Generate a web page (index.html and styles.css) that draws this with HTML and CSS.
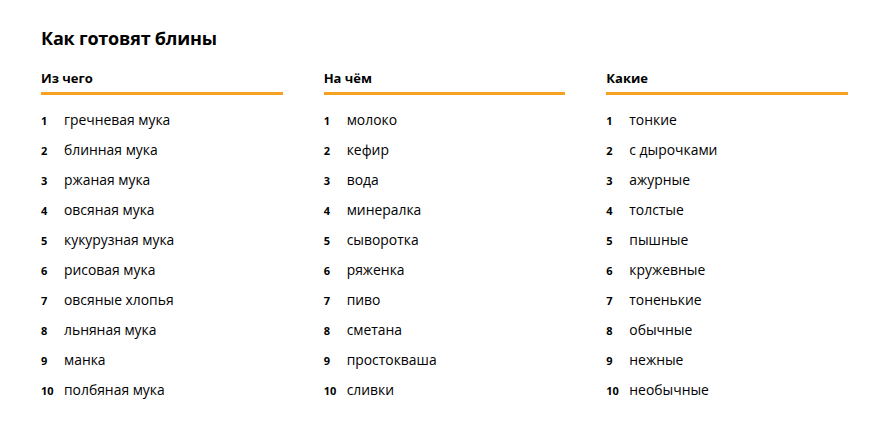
FILE: index.html
```html
<!DOCTYPE html>
<html lang="ru">
<head>
<meta charset="utf-8">
<link rel="stylesheet" href="styles.css">
</head>
<body>
<div class="page">
  <h1 class="title">Как готовят блины</h1>
  <div class="cols">
    <section class="col">
      <h2 class="col-head">Из чего</h2>
      <ol class="list">
        <li><span class="n">1</span><span class="t">гречневая мука</span></li>
        <li><span class="n">2</span><span class="t">блинная мука</span></li>
        <li><span class="n">3</span><span class="t">ржаная мука</span></li>
        <li><span class="n">4</span><span class="t">овсяная мука</span></li>
        <li><span class="n">5</span><span class="t">кукурузная мука</span></li>
        <li><span class="n">6</span><span class="t">рисовая мука</span></li>
        <li><span class="n">7</span><span class="t">овсяные хлопья</span></li>
        <li><span class="n">8</span><span class="t">льняная мука</span></li>
        <li><span class="n">9</span><span class="t">манка</span></li>
        <li><span class="n">10</span><span class="t">полбяная мука</span></li>
      </ol>
    </section>
    <section class="col">
      <h2 class="col-head">На чём</h2>
      <ol class="list">
        <li><span class="n">1</span><span class="t">молоко</span></li>
        <li><span class="n">2</span><span class="t">кефир</span></li>
        <li><span class="n">3</span><span class="t">вода</span></li>
        <li><span class="n">4</span><span class="t">минералка</span></li>
        <li><span class="n">5</span><span class="t">сыворотка</span></li>
        <li><span class="n">6</span><span class="t">ряженка</span></li>
        <li><span class="n">7</span><span class="t">пиво</span></li>
        <li><span class="n">8</span><span class="t">сметана</span></li>
        <li><span class="n">9</span><span class="t">простокваша</span></li>
        <li><span class="n">10</span><span class="t">сливки</span></li>
      </ol>
    </section>
    <section class="col">
      <h2 class="col-head">Какие</h2>
      <ol class="list">
        <li><span class="n">1</span><span class="t">тонкие</span></li>
        <li><span class="n">2</span><span class="t">с дырочками</span></li>
        <li><span class="n">3</span><span class="t">ажурные</span></li>
        <li><span class="n">4</span><span class="t">толстые</span></li>
        <li><span class="n">5</span><span class="t">пышные</span></li>
        <li><span class="n">6</span><span class="t">кружевные</span></li>
        <li><span class="n">7</span><span class="t">тоненькие</span></li>
        <li><span class="n">8</span><span class="t">обычные</span></li>
        <li><span class="n">9</span><span class="t">нежные</span></li>
        <li><span class="n">10</span><span class="t">необычные</span></li>
      </ol>
    </section>
  </div>
</div>
</body>
</html>
```
FILE: styles.css
```css
* { box-sizing: border-box; }
html, body { margin: 0; padding: 0; background: #fff; }
body {
  font-family: "Open Sans", "Noto Sans", Arial, sans-serif;
  color: #000;
}
.page {
  padding: 26px 40px 0 41px;
}
.title {
  margin: 0;
  font-size: 18px;
  font-weight: 700;
  line-height: 24px;
  letter-spacing: -0.2px;
}
.cols {
  display: grid;
  grid-template-columns: repeat(3, 1fr);
  column-gap: 41px;
  margin-top: 19px;
}
.col-head {
  margin: 0;
  font-size: 13px;
  font-weight: 700;
  line-height: 18px;
  padding-bottom: 5px;
  border-bottom: 3px solid #f8a01f;
}
.list {
  list-style: none;
  margin: 0;
  padding: 10px 0 0;
}
.list li {
  display: flex;
  align-items: baseline;
  height: 30px;
  line-height: 30px;
}
.n {
  width: 23px;
  flex: none;
  font-size: 11px;
  font-weight: 700;
}
.t {
  font-size: 13.9px;
}
```
